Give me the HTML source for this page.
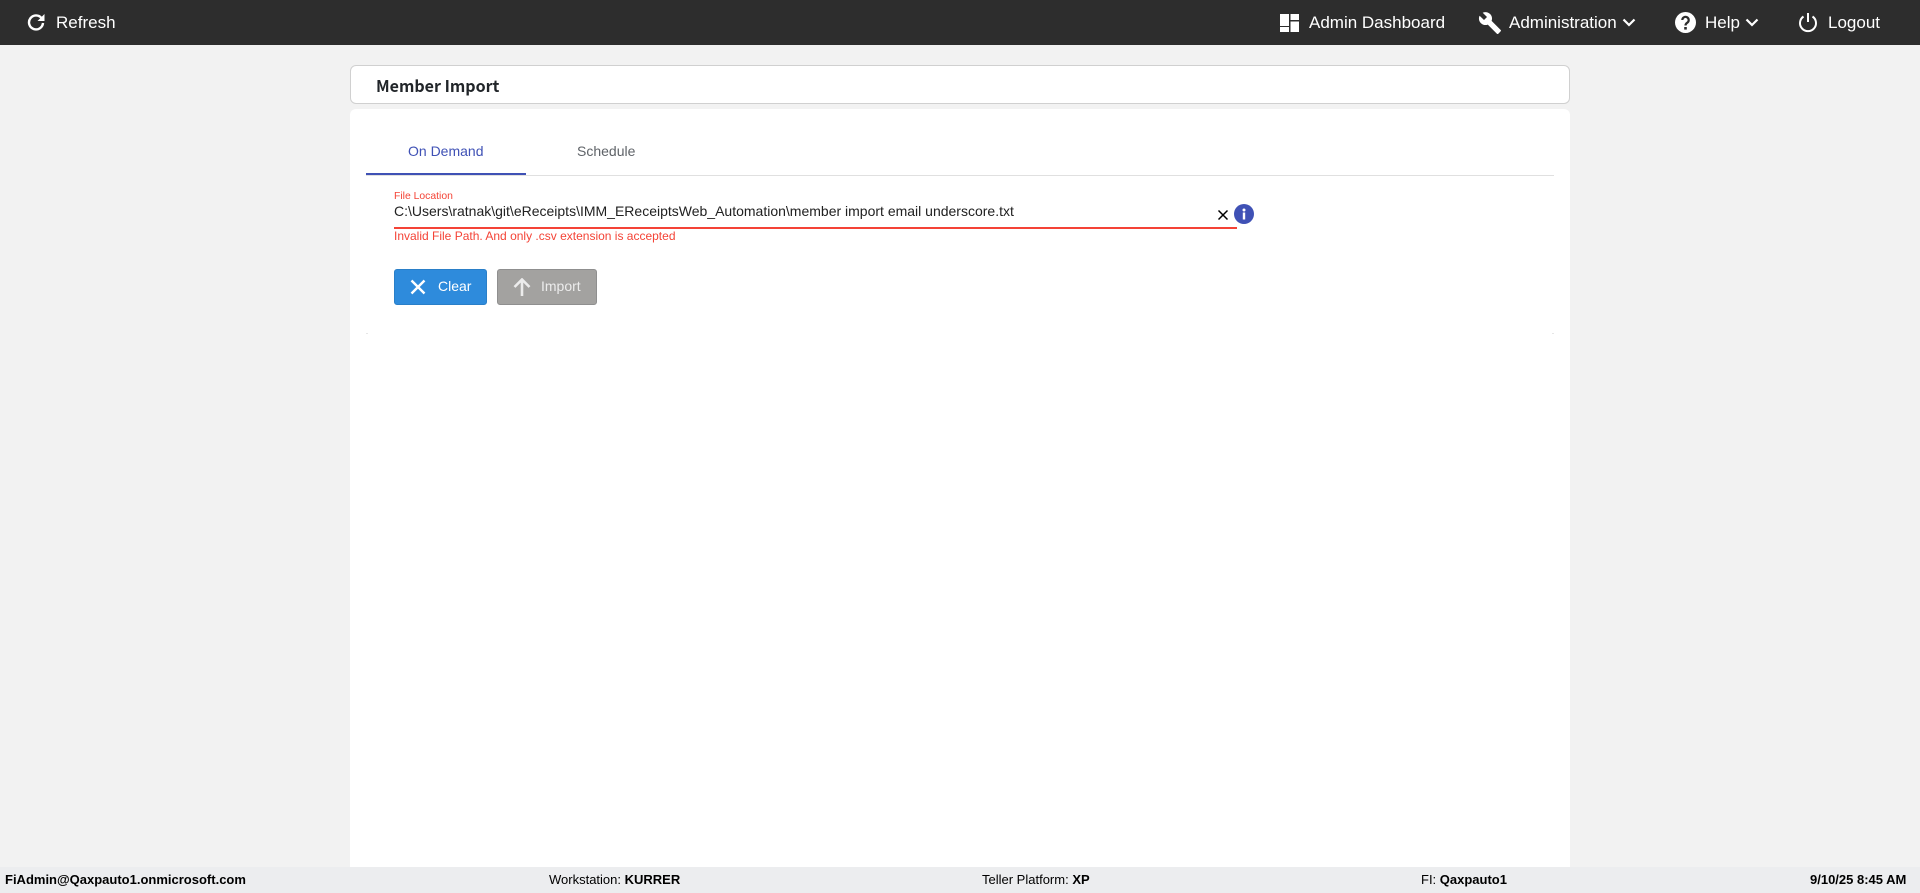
<!DOCTYPE html>
<html><head><meta charset="utf-8"><title>Member Import</title>
<style>
*{box-sizing:border-box}
html,body{margin:0;padding:0;width:1920px;height:893px;overflow:hidden;background:#f2f2f2;font-family:"Liberation Sans",Arial,sans-serif}
.abs{position:absolute;white-space:nowrap}
#top{position:absolute;left:0;top:0;width:1920px;height:45px;background:#2d2d2d}
.nav{color:#fff;font-size:17px;line-height:20px;top:13px}
svg{position:absolute;display:block}
#hdr{position:absolute;left:350px;top:65px;width:1220px;height:39px;background:#fff;border:1px solid #d0d0d0;border-radius:6px}
#card{position:absolute;left:350px;top:109px;width:1220px;height:770px;background:#fff;border-radius:6px}
#foot{position:absolute;left:0;top:867px;width:1920px;height:26px;background:#ecedef;font-size:13px;color:#000;line-height:26px}
#foot b{font-weight:700}
.btn{position:absolute;top:269px;height:36px;border-radius:3px}
</style></head><body>
<div id="top"></div>
<svg style="left:27px;top:13px" width="18" height="18" viewBox="0 0 18 18"><path d="M14.600 5.200A7 7 0 1 0 16 10" fill="none" stroke="#fff" stroke-width="2.400"/><path d="M17.500 1v7h-7z" fill="#fff"/></svg>
<div class="abs nav" style="left:56px">Refresh</div>

<svg style="left:1280px;top:14px" width="19" height="18" viewBox="0 0 19 18"><rect x="0" y="0" width="9" height="12" fill="#fff"/><rect x="10.500" y="0" width="8.500" height="6" fill="#fff"/><rect x="0" y="13" width="9" height="5" fill="#fff"/><rect x="10.500" y="7.500" width="8.500" height="10.500" fill="#fff"/></svg>
<div class="abs nav" style="left:1309px">Admin Dashboard</div>

<svg style="left:1478px;top:11px" width="24" height="24" viewBox="0 0 24 24"><path d="M22.700 19l-9.100-9.100c.9-2.300.4-5-1.500-6.900-2-2-5-2.400-7.400-1.300L9 6 6 9 1.600 4.700C.4 7.100.9 10.100 2.900 12.100c1.900 1.900 4.600 2.400 6.900 1.500l9.100 9.100c.4.400 1 .4 1.400 0l2.300-2.300c.5-.4.5-1.100.1-1.400z" fill="#fff"/></svg>
<div class="abs nav" style="left:1509px">Administration</div>
<svg style="left:1622px;top:18px" width="14" height="9" viewBox="0 0 14 9"><path d="M1.500 1.500L7 7l5.500-5.500" fill="none" stroke="#fff" stroke-width="2.200"/></svg>

<svg style="left:1675px;top:12px" width="21" height="21" viewBox="0 0 21 21"><circle cx="10.500" cy="10.500" r="10.500" fill="#fff"/><path d="M7.300 8a3.200 3.200 0 1 1 5 2.700c-1.200.8-1.800 1.300-1.800 2.800" fill="none" stroke="#2d2d2d" stroke-width="2.200"/><rect x="9.200" y="15" width="2.600" height="2.600" fill="#2d2d2d"/></svg>
<div class="abs nav" style="left:1705px">Help</div>
<svg style="left:1745px;top:18px" width="14" height="9" viewBox="0 0 14 9"><path d="M1.500 1.500L7 7l5.500-5.500" fill="none" stroke="#fff" stroke-width="2.200"/></svg>

<svg style="left:1798px;top:12px" width="20" height="21" viewBox="0 0 20 21"><path d="M5.500 4.500a8 8 0 1 0 9 0" fill="none" stroke="#fff" stroke-width="2"/><path d="M10 1v9" stroke="#fff" stroke-width="2"/></svg>
<div class="abs nav" style="left:1828px">Logout</div>

<div id="hdr"></div>
<div class="abs" style="left:376px;top:74px;font-family:'Noto Sans CJK JP','DejaVu Sans',sans-serif;font-weight:700;font-size:16px;line-height:22px;color:#212529">Member Import</div>
<div id="card"></div>

<div class="abs" style="left:366px;top:175px;width:1188px;height:1px;background:#e0e0e0"></div>
<div class="abs" style="left:366px;top:173px;width:160px;height:2px;background:#3f51b5"></div>
<div class="abs" style="left:408px;top:142px;font-size:14px;line-height:18px;color:#3f51b5">On Demand</div>
<div class="abs" style="left:577px;top:142px;font-size:14px;line-height:18px;color:#5f6368">Schedule</div>

<div class="abs" style="left:394px;top:191px;font-size:10.400px;line-height:12px;color:#f44336">File Location</div>
<div class="abs" style="left:394px;top:202px;font-size:14px;line-height:18px;color:#212121">C:\Users\ratnak\git\eReceipts\IMM_EReceiptsWeb_Automation\member import email underscore.txt</div>
<div class="abs" style="left:394px;top:227px;width:843px;height:2px;background:#f44336"></div>
<div class="abs" style="left:394px;top:229px;font-size:12px;line-height:14px;color:#f44336">Invalid File Path. And only .csv extension is accepted</div>
<svg style="left:1217px;top:209px" width="12" height="12" viewBox="0 0 12 12"><path d="M1.500 1.500l9 9M10.500 1.500l-9 9" stroke="#000" stroke-width="1.500"/></svg>
<svg style="left:1234px;top:204px" width="20" height="20" viewBox="0 0 20 20"><circle cx="10" cy="10" r="10" fill="#3f51b5"/><rect x="8.800" y="8.500" width="2.400" height="7" fill="#fff"/><circle cx="10" cy="6" r="1.500" fill="#fff"/></svg>

<div class="btn" style="left:394px;width:93px;background:#2e8bdc;border:1px solid #2a7fc8"></div>
<svg style="left:410px;top:279px" width="16" height="16" viewBox="0 0 16 16"><path d="M1.500 1.500l13 13M14.500 1.500l-13 13" stroke="#fff" stroke-width="2.400"/></svg>
<div class="abs" style="left:438px;top:277px;font-size:14px;line-height:18px;color:#fff">Clear</div>
<div class="btn" style="left:497px;width:100px;background:#a3a2a0;border:1px solid #8f8f8f"></div>
<svg style="left:513px;top:278px" width="18" height="18" viewBox="0 0 18 18"><path d="M9 18V2M1.500 9L9 1.500 16.500 9" fill="none" stroke="#ececec" stroke-width="2.600"/></svg>
<div class="abs" style="left:541px;top:277px;font-size:14px;line-height:18px;color:#ececec">Import</div>

<div class="abs" style="left:366px;top:333px;width:2px;height:1px;background:#e6e6e6"></div>
<div class="abs" style="left:1552px;top:333px;width:2px;height:1px;background:#e6e6e6"></div>

<div id="foot">
<div class="abs" style="left:5px;top:0"><b>FiAdmin@Qaxpauto1.onmicrosoft.com</b></div>
<div class="abs" style="left:549px;top:0">Workstation: <b>KURRER</b></div>
<div class="abs" style="left:982px;top:0">Teller Platform: <b>XP</b></div>
<div class="abs" style="left:1421px;top:0">FI: <b>Qaxpauto1</b></div>
<div class="abs" style="left:1810px;top:0"><b>9/10/25 8:45 AM</b></div>
</div>
</body></html>
